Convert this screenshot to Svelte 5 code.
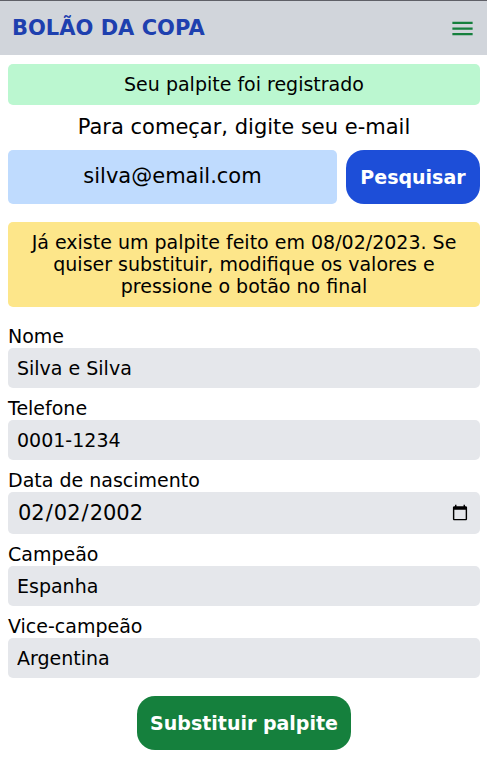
<script>
  let email = $state('silva@email.com');
  let fields = $state([
    { id: 'nome', label: 'Nome', type: 'text', value: 'Silva e Silva' },
    { id: 'telefone', label: 'Telefone', type: 'text', value: '0001-1234' },
    { id: 'nascimento', label: 'Data de nascimento', type: 'date', value: '2002-02-02' },
    { id: 'campeao', label: 'Campeão', type: 'text', value: 'Espanha' },
    { id: 'vice', label: 'Vice-campeão', type: 'text', value: 'Argentina' }
  ]);
</script>

<header>
  <h1>BOLÃO DA COPA</h1>
  <button class="menu" type="button" aria-label="Menu">
    <svg viewBox="0 0 24 24" width="27" height="27" fill="none" stroke="currentColor" stroke-width="2">
      <path d="M3 7h18M3 12h18M3 17h18" />
    </svg>
  </button>
</header>

<main>
  <p class="notice success">Seu palpite foi registrado</p>

  <form class="search" onsubmit={(e) => e.preventDefault()}>
    <label for="email">Para começar, digite seu e-mail</label>
    <div class="row">
      <input id="email" type="email" bind:value={email} />
      <button class="action blue" type="submit">Pesquisar</button>
    </div>
  </form>

  <p class="notice warning">
    Já existe um palpite feito em 08/02/2023. Se quiser substituir, modifique os valores e pressione o botão no final
  </p>

  <form class="guess" onsubmit={(e) => e.preventDefault()}>
    {#each fields as field (field.id)}
      <div class="field">
        <label for={field.id}>{field.label}</label>
        {#if field.type === 'date'}
          <input id={field.id} type="date" bind:value={field.value} />
        {:else}
          <input id={field.id} type="text" bind:value={field.value} />
        {/if}
      </div>
    {/each}
    <button class="action green" type="submit">Substituir palpite</button>
  </form>
</main>

<style>
  :global(body) {
    margin: 0;
    background: #fff;
    color: #000;
    font-family: 'DejaVu Sans', sans-serif;
    font-size: 19px;
    line-height: 22px;
  }

  h1,
  p {
    margin: 0;
  }

  input,
  button {
    box-sizing: border-box;
    margin: 0;
    border: 0;
    font: inherit;
    color: inherit;
  }

  header {
    display: flex;
    align-items: center;
    justify-content: space-between;
    padding: 13px 11px 13px 12px;
    border-top: 1px solid #5f6067;
    background: #d1d5db;
  }

  h1 {
    color: #1e40af;
    font-size: 21px;
    font-weight: 700;
    line-height: 28px;
  }

  .menu {
    display: flex;
    padding: 0;
    background: none;
    color: #15803d;
  }

  main {
    padding: 9px 7px 23px 8px;
  }

  .notice {
    padding: 9px 16px 10px;
    border-radius: 5px;
    text-align: center;
  }

  .success {
    background: #bbf7d0;
  }

  .warning {
    margin-top: 18px;
    background: #fde68a;
  }

  .search label {
    display: block;
    padding: 9px 0;
    font-size: 21px;
    line-height: 27px;
    text-align: center;
  }

  .row {
    display: flex;
    gap: 9px;
  }

  .row input {
    flex: 1;
    min-width: 0;
    padding: 12px 13px 14px;
    border-radius: 5px;
    background: #bfdbfe;
    font-size: 21px;
    text-align: center;
  }

  .action {
    padding: 13px;
    border-radius: 18px;
    color: #fff;
    font-size: 19px;
    font-weight: 600;
    line-height: 28px;
  }

  .blue {
    min-width: 134px;
    background: #1d4ed8;
  }

  .green {
    align-self: center;
    margin-top: 9px;
    background: #15803d;
  }

  .guess {
    display: flex;
    flex-direction: column;
    gap: 9px;
    margin-top: 18px;
  }

  .field {
    display: flex;
    flex-direction: column;
  }

  .field label {
    line-height: 23px;
  }

  .field input {
    height: 40px;
    padding: 9px;
    border-radius: 5px;
    background: #e5e7eb;
  }

  .field input[type='date'] {
    height: 42px;
    font-size: 21px;
  }

  .field input[type='date']::-webkit-calendar-picker-indicator {
    font-size: 18px;
  }
</style>
